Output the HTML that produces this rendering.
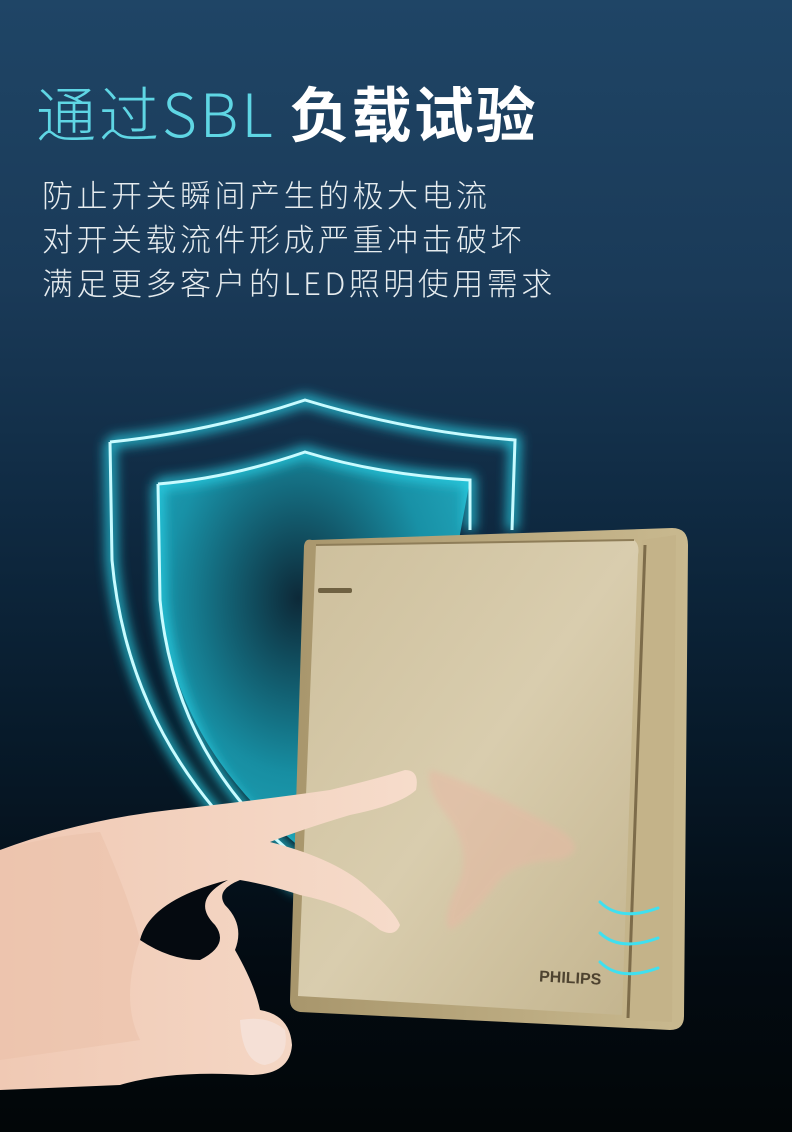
<!DOCTYPE html>
<html><head><meta charset="utf-8"><style>
html,body{margin:0;padding:0}
body{width:792px;height:1132px;overflow:hidden;position:relative;background:linear-gradient(180deg,#1f4566 0%,#1a3a58 25%,#0f2a42 45%,#071a2a 65%,#030b12 85%,#020608 100%);font-family:"Liberation Sans","Noto Sans CJK SC",sans-serif}
.t{position:absolute;left:36px;top:76px;font-size:60px;line-height:72px;white-space:nowrap}
.t .a{color:#5fd6e4;font-weight:300;font-family:"Noto Sans CJK SC","Liberation Sans",sans-serif;letter-spacing:3px}
.t .b{color:#fff;font-weight:bold;font-family:"Noto Sans CJK SC",sans-serif;letter-spacing:2px;margin-left:14px}
.s{position:absolute;left:42px;top:172px;font-size:31px;line-height:44px;color:#e6ecef;font-family:"Noto Sans CJK SC",sans-serif;font-weight:300;letter-spacing:3.5px}
svg{position:absolute;left:0;top:0}
</style></head><body>
<div class="t"><span class="a">通过SBL</span><span class="b">负载试验</span></div>
<div class="s">防止开关瞬间产生的极大电流<br>对开关载流件形成严重冲击破坏<br>满足更多客户的LED照明使用需求</div>
<svg width="792" height="1132" viewBox="0 0 792 1132">
<defs>
<filter id="g" x="-30%" y="-30%" width="160%" height="160%"><feGaussianBlur stdDeviation="6"/></filter>
<filter id="g2" x="-30%" y="-30%" width="160%" height="160%"><feGaussianBlur stdDeviation="3"/></filter>
<radialGradient id="sf" cx="0.45" cy="0.35" r="0.7"><stop offset="0" stop-color="#0d2a38"/><stop offset="0.6" stop-color="#1aa3b8"/><stop offset="1" stop-color="#28c4d8"/></radialGradient>
<linearGradient id="pl" x1="0" y1="0" x2="1" y2="1"><stop offset="0" stop-color="#cdbf9c"/><stop offset="0.5" stop-color="#d9cdae"/><stop offset="1" stop-color="#c3b48e"/></linearGradient>
<linearGradient id="fr" x1="0" y1="0" x2="1" y2="0"><stop offset="0" stop-color="#a8966c"/><stop offset="1" stop-color="#c9b98f"/></linearGradient>
<linearGradient id="sk" x1="0" y1="0" x2="1" y2="0"><stop offset="0" stop-color="#f0c9b4"/><stop offset="1" stop-color="#f6dccb"/></linearGradient>
</defs>
<path d="M305 452 Q230 478 158 484 L160 600 Q175 760 330 870 L400 860 L470 480 Q380 475 305 452Z" fill="url(#sf)" opacity="0.85"/>
<g fill="none" stroke="#29d6ea" stroke-width="10" filter="url(#g)" opacity="0.9">
<path d="M110 442 Q210 432 305 400 Q410 432 515 440 L512 530"/>
<path d="M110 442 L112 560 Q130 760 300 890"/>
<path d="M158 484 Q230 478 305 452 Q380 475 470 480 L470 530"/>
<path d="M158 484 L160 600 Q175 760 300 860"/>
</g>
<g fill="none" stroke="#c8fbff" stroke-width="3">
<path d="M110 442 Q210 432 305 400 Q410 432 515 440 L512 530"/>
<path d="M110 442 L112 560 Q130 760 300 890"/>
<path d="M158 484 Q230 478 305 452 Q380 475 470 480 L470 530"/>
<path d="M158 484 L160 600 Q175 760 300 860"/>
</g>
<path d="M312 540 Q305 538 304 546 L290 1000 Q290 1010 300 1012 L670 1030 Q684 1030 684 1016 L688 545 Q688 528 672 528 Z" fill="url(#fr)"/>
<path d="M642 540 L676 535 L672 1022 L628 1020Z" fill="#c4b389"/>
<path d="M645 545 L628 1018" stroke="#7d6c4a" stroke-width="3"/>
<path d="M316 545 L634 540 Q640 545 638 555 L622 1015 L298 996 Z" fill="url(#pl)"/>
<path d="M316 545 L634 540" stroke="#8e7d58" stroke-width="2"/>
<rect x="318" y="588" width="34" height="5" rx="2" fill="#6f6142"/>
<path d="M430 770 Q470 780 560 830 Q590 850 560 860 Q520 860 500 880 Q470 920 450 930 Q440 920 460 880 Q470 850 450 820 Q425 790 430 770Z" fill="#e6b9a4" opacity="0.55" filter="url(#g2)"/>
<text x="539" y="983" font-family="Liberation Sans,sans-serif" font-weight="bold" font-size="16" fill="#4e4330" transform="rotate(3 568 980)">PHILIPS</text>
<g fill="none" stroke="#3fe0f0" stroke-width="3" stroke-linecap="round">
<path d="M600 902 Q620 922 658 908"/><path d="M600 933 Q620 952 658 938"/><path d="M600 962 Q620 982 658 968"/>
</g>
<path d="M0 850 Q80 820 170 810 Q260 800 330 790 Q380 778 405 770 Q420 770 416 790 Q400 805 350 815 Q300 830 270 842 Q340 860 370 890 Q395 912 400 925 Q395 938 380 930 Q350 905 300 895 Q270 885 240 880 Q215 890 225 905 Q245 925 235 950 Q255 985 260 1010 Q290 1015 292 1045 Q290 1075 250 1075 Q170 1070 120 1085 L0 1090 Z" fill="url(#sk)"/>
<path d="M0 850 Q50 836 100 832 Q130 900 140 940 Q120 1000 140 1040 L0 1060Z" fill="#e9bfa8" opacity="0.5"/>
<path d="M228 880 Q190 900 215 925 Q230 945 200 960 Q170 960 140 940 Q150 900 228 880Z" fill="#050a10"/>
<path d="M240 1020 Q268 1015 285 1030 Q290 1060 265 1065 Q242 1062 240 1020Z" fill="#f5e0d6"/>
</svg>
</body></html>
